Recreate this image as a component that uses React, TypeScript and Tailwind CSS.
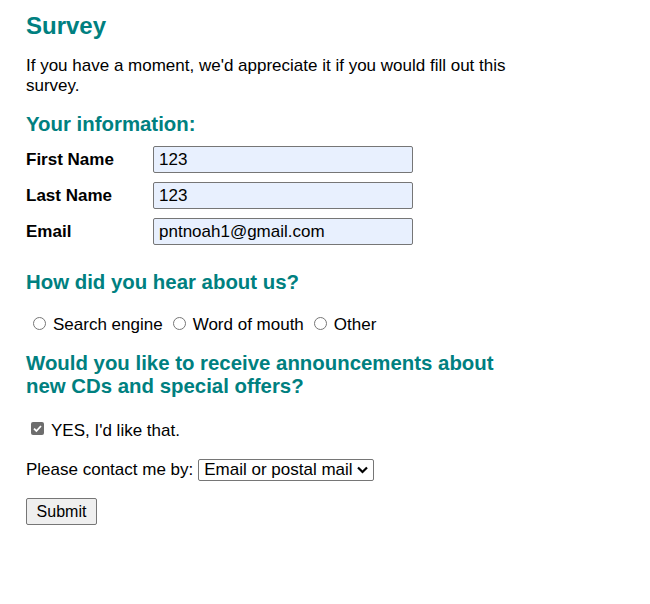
import React from "react";

function Radio({ first }: { first?: boolean }) {
  return (
    <span
      className={`${first ? "ml-[7px]" : "ml-[10px]"} mr-[7px] mt-[-4px] inline-block w-[13px] h-[13px] rounded-full border border-[#767676] bg-white shrink-0`}
    />
  );
}

export default function App() {
  const font = { fontFamily: '"Liberation Sans", Arial, sans-serif' };
  return (
    <div className="bg-white min-h-[604px] text-black" style={font}>
      <div className="w-[500px] ml-[26px] pt-[12px] text-[17px]">
        <h1 className="text-[24px] font-bold text-[#008080] leading-[27px]">Survey</h1>
        <p className="mt-[17px] leading-[20px]">
          If you have a moment, we'd appreciate it if you would fill out this survey.
        </p>
        <h2 className="mt-[17px] text-[20.4px] font-bold text-[#008080] leading-[23px]">Your information:</h2>
        <div className="mt-[10px] flex flex-col gap-[9px]">
          {[
            ["First Name", "123"],
            ["Last Name", "123"],
            ["Email", "pntnoah1@gmail.com"],
          ].map(([l, v]) => (
            <div key={l} className="flex items-center">
              <label className="w-[127px] font-bold">{l}</label>
              <div className="w-[260px] h-[27px] border border-[#767676] rounded-[2px] bg-[#e8f0fe] px-[5px] flex items-center">
                {v}
              </div>
            </div>
          ))}
        </div>
        <h2 className="mt-[26px] text-[20.4px] font-bold text-[#008080] leading-[23px]">How did you hear about us?</h2>
        <div className="mt-[21px] flex items-center leading-[20px]">
          <Radio first />
          <span>Search engine</span>
          <Radio />
          <span>Word of mouth</span>
          <Radio />
          <span>Other</span>
        </div>
        <h2 className="mt-[17px] text-[20.4px] font-bold text-[#008080] leading-[23px]">
          Would you like to receive announcements about new CDs and special offers?
        </h2>
        <div className="mt-[23px] flex items-center leading-[20px]">
          <span className="ml-[5px] mr-[7px] mt-[-5px] w-[13px] h-[13px] rounded-[2px] bg-[#6d6d6d] flex items-center justify-center shrink-0">
            <svg width="11" height="11" viewBox="0 0 11 11">
              <path d="M2 5.6 L4.4 8 L9 3" fill="none" stroke="white" strokeWidth="1.8" />
            </svg>
          </span>
          <span>YES, I'd like that.</span>
        </div>
        <div className="mt-[18px] flex items-center leading-[20px]">
          <span>Please contact me by:</span>
          <div className="ml-[5px] h-[22px] border border-[#767676] rounded-[2px] flex items-center pl-[5px] pr-[5px] gap-[4px]">
            <span>Email or postal mail</span>
            <svg width="11" height="8" viewBox="0 0 11 8">
              <path d="M1 1.5 L5.5 6 L10 1.5" fill="none" stroke="black" strokeWidth="2.2" />
            </svg>
          </div>
        </div>
        <button className="mt-[17px] h-[27px] w-[71px] text-[16px] bg-[#efefef] border border-[#767676] rounded-[2px] flex items-center justify-center">
          Submit
        </button>
      </div>
    </div>
  );
}
